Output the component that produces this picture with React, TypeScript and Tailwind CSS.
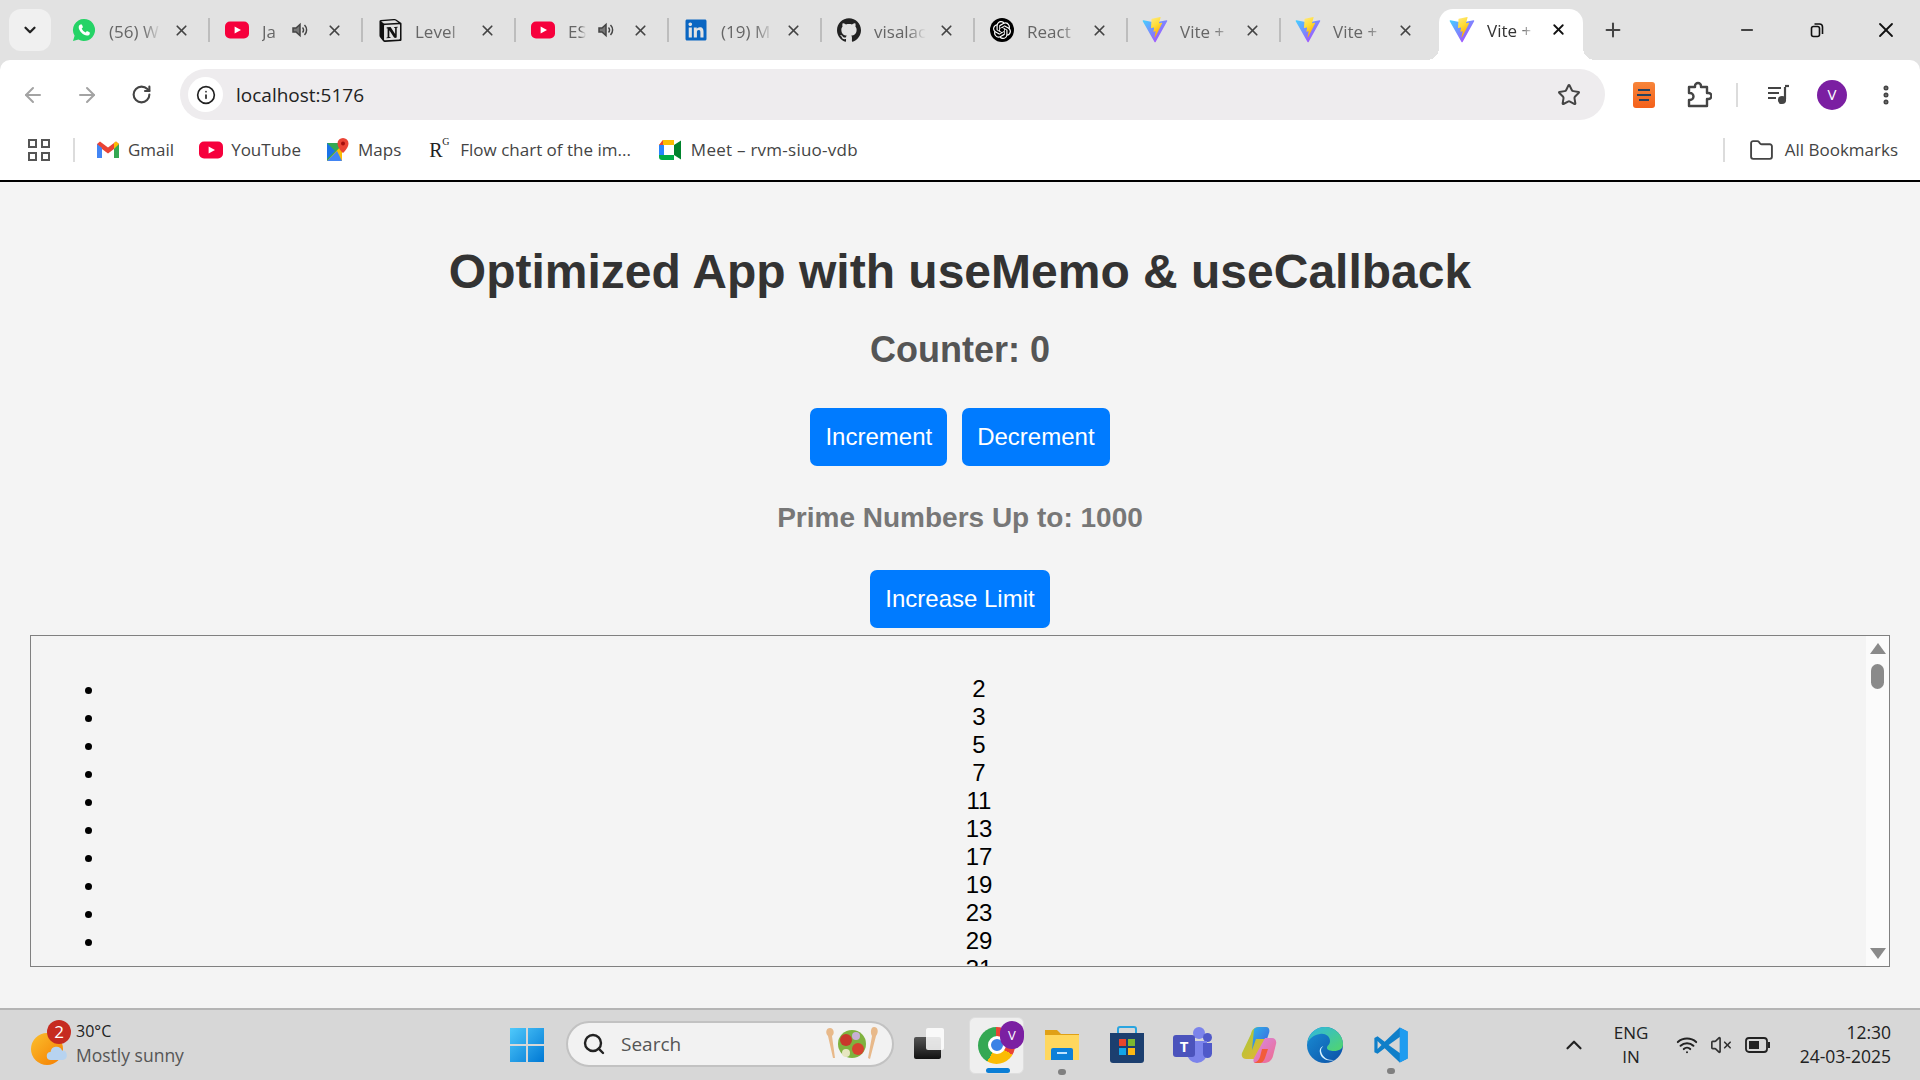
import React from "react";
import { SiNotion, SiGithub, SiOpenai } from "react-icons/si";
import { FaLinkedin } from "react-icons/fa";
import { ArrowLeft, ArrowRight, RotateCw, Info, Star, MoreVertical, Plus, X, Minus, ChevronDown, ChevronUp, Folder, Search, Wifi, VolumeX } from "lucide-react";

const uiFont = "font-['Open_Sans',sans-serif]";

function WhatsAppIcon() {
  return (
    <svg width="24" height="24" viewBox="0 0 24 24">
      <path d="M12 1a11 11 0 0 0-9.400 16.700L1 23l5.500-1.500A11 11 0 1 0 12 1Z" fill="#25d366" />
      <path d="M8.500 6.500c-.6 0-1.800 1-1.800 2.800 0 3.700 4.800 8.300 8.300 8.300 1.800 0 2.800-1.200 2.800-1.900l-.2-1.400-2.700-1.300-1.200 1.400c-1.700-.6-3.300-2.200-4-4l1.300-1.100-1.100-2.700Z" fill="#fff" />
    </svg>
  );
}

function YouTubeIcon({ size = 24 }: { size?: number }) {
  return (
    <svg width={size} height={size} viewBox="0 0 24 24">
      <rect x="0" y="3.500" width="24" height="17" rx="5" fill="#f6003c" />
      <path d="M9.600 8.400 16 12l-6.400 3.600Z" fill="#fff" />
    </svg>
  );
}

function ViteIcon() {
  return (
    <svg width="28" height="28" viewBox="0 0 32 32">
      <defs>
        <linearGradient id="viteA" x1="0" y1="0" x2="1" y2="1">
          <stop offset="0" stopColor="#41d1ff" />
          <stop offset="1" stopColor="#bd34fe" />
        </linearGradient>
        <linearGradient id="viteB" x1="0" y1="0" x2="0.4" y2="1">
          <stop offset="0" stopColor="#ffea83" />
          <stop offset="0.5" stopColor="#ffdd35" />
          <stop offset="1" stopColor="#ffa800" />
        </linearGradient>
      </defs>
      <path d="M29.880 6.040 16.700 29.600a.72.72 0 0 1-1.250 0L2 6.040a.72.72 0 0 1 .75-1.060l13.200 2.360a.72.72 0 0 0 .25 0l12.930-2.360a.72.72 0 0 1 .75 1.060Z" fill="url(#viteA)" />
      <path d="M22 1.100 12.300 3a.36.36 0 0 0-.29.33l-.6 10.080a.36.36 0 0 0 .44.37l2.700-.62a.36.36 0 0 1 .43.42l-.8 3.930a.36.36 0 0 0 .46.42l1.670-.5a.36.36 0 0 1 .46.42l-1.280 6.180c-.08.39.44.6.65.27l.14-.22 7.900-15.770a.36.36 0 0 0-.39-.52l-2.780.54a.36.36 0 0 1-.41-.45l1.810-6.290a.36.36 0 0 0-.42-.45Z" fill="url(#viteB)" />
    </svg>
  );
}

function OpenAiIcon() {
  return (
    <div className="w-6 h-6 rounded-full bg-black flex items-center justify-center">
      <SiOpenai size={18} color="#fff" />
    </div>
  );
}

function SpeakerIcon() {
  return (
    <svg width="18" height="18" viewBox="0 0 18 18" fill="none" stroke="#444" strokeWidth="1.500">
      <path d="M2 7v4h3l4 3.500v-11L5 7Z" fill="#777" />
      <path d="M11.500 6.500a3.500 3.500 0 0 1 0 5M13.500 4a7 7 0 0 1 0 10" />
    </svg>
  );
}

function ExtensionIcon() {
  return (
    <svg width="26" height="28" viewBox="0 0 26 28" fill="none" stroke="#444" strokeWidth="2.400" strokeLinejoin="round">
      <path d="M3 6h6V5a3 3 0 0 1 6 0v1h6v6h1.500a3 3 0 0 1 0 6H21v7H3v-6h1a3 3 0 0 0 0-7H3Z" />
    </svg>
  );
}

interface TabItem {
  icon: React.ReactNode;
  title: string;
  audio?: boolean;
  divider?: boolean;
}

const tabs: TabItem[] = [
  { icon: <WhatsAppIcon />, title: "(56) W", divider: true },
  { icon: <YouTubeIcon />, title: "Ja", audio: true, divider: true },
  { icon: <SiNotion size={23} color="#111" />, title: "Level", divider: true },
  { icon: <YouTubeIcon />, title: "ES", audio: true, divider: true },
  { icon: <FaLinkedin size={24} color="#0a66c2" />, title: "(19) M", divider: true },
  { icon: <SiGithub size={24} color="#222" />, title: "visalac", divider: true },
  { icon: <OpenAiIcon />, title: "React", divider: true },
  { icon: <ViteIcon />, title: "Vite +", divider: true },
  { icon: <ViteIcon />, title: "Vite +" },
];

function Tab({ icon, title, audio, divider }: TabItem) {
  return (
    <div className="w-[153px] h-[40px] flex items-center shrink-0 relative mt-[10px]">
      <div className="w-[54px] flex justify-center">{icon}</div>
      <div className={`${audio ? "w-[18px]" : "w-[52px]"} ml-[-2px] mt-[3px] text-[17px] leading-[24px] text-[#666] whitespace-nowrap [mask-image:linear-gradient(to_right,black_65%,transparent)]`}>
        {title}
      </div>
      {audio && <div className="ml-[11px] w-[18px] flex justify-center"><SpeakerIcon /></div>}
      <div className={`${audio ? "ml-[14px]" : "ml-[9px]"} w-[22px] flex justify-center`}>
        <X size={17} color="#444" strokeWidth={2.400} />
      </div>
      {divider && <div className="absolute right-0 top-[8px] h-[24px] w-[2px] bg-[#bdbdbd]" />}
    </div>
  );
}

function TabStrip() {
  return (
    <div className="h-[60px] bg-[#e2e2e2] flex items-start shrink-0">
      <div className="w-[42px] h-[42px] mt-[9px] ml-[9px] mr-[6px] rounded-[12px] bg-[#f0f0f0] flex items-center justify-center shrink-0">
        <ChevronDown size={18} color="#222" strokeWidth={3} />
      </div>
      {tabs.map((t, i) => (
        <Tab key={i} {...t} />
      ))}
      <div className="relative ml-[5px] mt-[9px] w-[144px] h-[51px] bg-white rounded-t-[14px] flex items-start pt-[7px] shrink-0">
        <div className="absolute bottom-0 -left-3 w-3 h-3 bg-[radial-gradient(circle_at_0_0,transparent_12px,white_12px)]" />
        <div className="absolute bottom-0 -right-3 w-3 h-3 bg-[radial-gradient(circle_at_100%_0,transparent_12px,white_12px)]" />
        <div className="w-[46px] flex justify-center"><ViteIcon /></div>
        <div className="w-[48px] ml-[2px] mt-[3px] text-[17px] leading-[24px] text-[#333] whitespace-nowrap [mask-image:linear-gradient(to_right,black_65%,transparent)]">
          Vite +
        </div>
        <div className="ml-[12px] w-[22px] mt-[5px] flex justify-center">
          <X size={17} color="#111" strokeWidth={2.600} />
        </div>
      </div>
      <div className="ml-[18px] mt-[19px] w-[24px] flex justify-center shrink-0">
        <Plus size={22} color="#444" strokeWidth={2.200} />
      </div>
      <div className="flex-1" />
      <div className="w-[70px] h-[60px] flex items-center justify-center"><Minus size={18} color="#111" strokeWidth={2.200} /></div>
      <div className="w-[70px] h-[60px] flex items-center justify-center">
        <svg width="16" height="16" viewBox="0 0 16 16" fill="none" stroke="#111" strokeWidth="1.600">
          <rect x="2.500" y="4.500" width="8" height="10" rx="2" />
          <path d="M5.500 2h5a3 3 0 0 1 3 3v7" />
        </svg>
      </div>
      <div className="w-[68px] h-[60px] flex items-center justify-center"><X size={24} color="#111" strokeWidth={1.800} /></div>
    </div>
  );
}

function Toolbar() {
  return (
    <div className="h-[60px] bg-white rounded-t-[10px] flex items-start shrink-0 pl-[6px]">
      <div className="w-[54px] h-[51px] mt-[9px] flex items-center justify-center"><ArrowLeft size={24} color="#a3a3a3" strokeWidth={2} /></div>
      <div className="w-[54px] h-[51px] mt-[9px] flex items-center justify-center"><ArrowRight size={24} color="#a3a3a3" strokeWidth={2} /></div>
      <div className="w-[54px] h-[51px] mt-[9px] flex items-center justify-center"><RotateCw size={21} color="#444" strokeWidth={2.400} /></div>
      <div className="flex-1 h-[51px] mt-[9px] ml-[12px] bg-[#eeecee] rounded-full flex items-center pl-[8px] pr-[24px]">
        <div className="w-[35px] h-[35px] rounded-full bg-white flex items-center justify-center">
          <Info size={20} color="#222" strokeWidth={2} />
        </div>
        <span className="ml-[13px] text-[19px] leading-[26px] text-[#222]">localhost:5176</span>
        <div className="flex-1" />
        <Star size={24} color="#444" strokeWidth={2} />
      </div>
      <div className="w-[315px] h-[51px] mt-[9px] flex items-center">
        <div className="ml-[28px] w-[22px] h-[26px] rounded-[3px] bg-[linear-gradient(#f7853a,#f4601a)] flex flex-col items-center justify-center gap-[3px]">
          <div className="w-[12px] h-[2px] bg-[#27415e]" />
          <div className="w-[14px] h-[2px] bg-[#27415e]" />
          <div className="w-[10px] h-[2px] bg-[#27415e]" />
        </div>
        <div className="ml-[31px] w-[26px] flex justify-center"><ExtensionIcon /></div>
        <div className="ml-[24px] w-[2px] h-[24px] bg-[#dcdcdc]" />
        <div className="ml-[28px]">
          <svg width="24" height="22" viewBox="0 0 24 22" fill="none" stroke="#444" strokeWidth="2.200">
            <path d="M2 4h13M2 9h11M2 14h8M19 3v12" />
            <path d="M19 2h4" />
            <circle cx="16" cy="16" r="3" fill="#444" />
          </svg>
        </div>
        <div className="ml-[27px] w-[30px] h-[30px] rounded-full bg-[#7b1fa2] flex items-center justify-center text-white text-[15px]">V</div>
        <div className="ml-[27px] w-[24px] flex justify-center"><MoreVertical size={24} color="#444" strokeWidth={3} /></div>
      </div>
    </div>
  );
}

function GmailIcon() {
  return (
    <svg width="24" height="20" viewBox="0 0 24 20">
      <path d="M1 18h5V9L12 13.500 18 9v9h5V4L20 1.500 12 7.500 4 1.500 1 4Z" fill="#ea4335" />
      <path d="M1 4v14h5V8Z" fill="#4285f4" />
      <path d="M23 4v14h-5V8Z" fill="#34a853" />
      <path d="M18 9l5-5-3-2.500-2 1.500Z" fill="#fbbc04" />
    </svg>
  );
}

function MapsIcon() {
  return (
    <svg width="24" height="26" viewBox="0 0 24 26">
      <path d="M2 6h15v18H2Z" fill="#34a853" />
      <path d="M2 24 17 8v16Z" fill="#fbbc04" />
      <path d="M2 24 12 14l5 10Z" fill="#4285f4" />
      <path d="M2 6l8 8-8 8Z" fill="#1a73e8" />
      <path d="M18 1a5.500 5.500 0 0 0-5.500 5.500C12.500 11 18 16 18 16s5.500-5 5.500-9.500A5.500 5.500 0 0 0 18 1Z" fill="#ea4335" />
      <circle cx="18" cy="6.500" r="2" fill="#a50e0e" />
    </svg>
  );
}

function MeetIcon() {
  return (
    <svg width="24" height="22" viewBox="0 0 24 22">
      <path d="M5 1h11v5H1Z" fill="#fbbc04" />
      <path d="M1 6h5v10H1Z" fill="#2684fc" />
      <path d="M1 16h15v5H4a3 3 0 0 1-3-3Z" fill="#00ac47" />
      <path d="M6 6h10v10H6Z" fill="#fff" />
      <path d="M16 6v10l7 4.500V1.500Z" fill="#00832d" />
      <path d="M5 1v5H1Z" fill="#ea4335" />
    </svg>
  );
}

function BookmarksBar() {
  return (
    <div className="h-[62px] bg-white border-b-2 border-black flex items-center shrink-0 text-[17px] text-[#444]">
      <div className="ml-[28px] w-[22px] h-[22px] grid grid-cols-2 gap-[4px]">
        <div className="border-2 border-[#555]" />
        <div className="border-2 border-[#555]" />
        <div className="border-2 border-[#555]" />
        <div className="border-2 border-[#555]" />
      </div>
      <div className="ml-[23px] w-[2px] h-[24px] bg-[#dcdcdc]" />
      <div className="ml-[21px]"><GmailIcon /></div>
      <span className="ml-[8px]">Gmail</span>
      <div className="ml-[25px]"><YouTubeIcon /></div>
      <span className="ml-[8px]">YouTube</span>
      <div className="ml-[24px]"><MapsIcon /></div>
      <span className="ml-[9px]">Maps</span>
      <span className="ml-[28px] w-[22px] font-['Liberation_Serif',serif] text-[20px] text-[#222] relative">
        R<span className="absolute left-[13px] top-[-1px] text-[10px]">G</span>
      </span>
      <span className="ml-[9px]">Flow chart of the im...</span>
      <div className="ml-[27px]"><MeetIcon /></div>
      <span className="ml-[9px] tracking-[0.25px]">Meet – rvm-siuo-vdb</span>
      <div className="flex-1" />
      <div className="w-[2px] h-[24px] bg-[#dcdcdc]" />
      <div className="ml-[24px]"><Folder size={25} color="#444" strokeWidth={1.800} /></div>
      <span className="ml-[11px] mr-[22px]">All Bookmarks</span>
    </div>
  );
}

const primes = [2, 3, 5, 7, 11, 13, 17, 19, 23, 29, 31, 37];

function PageButton({ children }: { children: React.ReactNode }) {
  return (
    <button className="h-[58px] px-[15px] rounded-[7px] bg-[#007bff] text-white text-[24px] leading-[28px]">
      {children}
    </button>
  );
}

function PrimeList() {
  return (
    <div className="mx-[30px] mt-[7px] h-[332px] border border-[#808080] flex overflow-hidden self-stretch">
      <ul className="flex-1 list-disc pl-[75px] pr-[14px] pt-[39px] overflow-hidden text-[24px] leading-[28px] text-black text-center">
        {primes.map((n) => (
          <li key={n}>{n}</li>
        ))}
      </ul>
      <div className="w-[23px] bg-[#fbfbfb] flex flex-col items-center pt-[7px] shrink-0">
        <div className="w-0 h-0 border-x-[8px] border-x-transparent border-b-[11px] border-b-[#8a8a8a]" />
        <div className="w-[13px] h-[25px] rounded-full bg-[#8a8a8a] mt-[10px]" />
        <div className="flex-1" />
        <div className="w-0 h-0 border-x-[8px] border-x-transparent border-t-[11px] border-t-[#8a8a8a] mb-[7px]" />
      </div>
    </div>
  );
}

function Page() {
  return (
    <div className="flex-1 min-h-0 bg-[#f4f4f4] flex flex-col items-center pt-[62px] font-['Liberation_Sans',sans-serif]">
      <h1 className="text-[48px] leading-[55px] font-bold text-[#333]">Optimized App with useMemo &amp; useCallback</h1>
      <h2 className="mt-[30px] text-[36px] leading-[42px] font-bold text-[#555]">Counter: 0</h2>
      <div className="mt-[37px] flex gap-[15px]">
        <PageButton>Increment</PageButton>
        <PageButton>Decrement</PageButton>
      </div>
      <h3 className="mt-[35px] text-[28px] leading-[33px] font-bold text-[#777]">Prime Numbers Up to: 1000</h3>
      <div className="mt-[36px]">
        <PageButton>Increase Limit</PageButton>
      </div>
      <PrimeList />
    </div>
  );
}

function WeatherIcon() {
  return (
    <div className="relative w-[34px] h-[34px]">
      <div className="absolute left-0 top-[1px] w-[32px] h-[32px] rounded-full bg-[linear-gradient(135deg,#fbc02d,#f57c00)]" />
      <div className="absolute left-[16px] top-[-12px] w-[24px] h-[24px] rounded-full bg-[#c62b20] text-white text-[17px] leading-[24px] text-center">2</div>
      <svg className="absolute left-[14px] top-[12px]" width="24" height="18" viewBox="0 0 24 18">
        <path d="M6 16a4 4 0 0 1-.5-8A6 6 0 0 1 17 6.500 4.800 4.800 0 0 1 18 16Z" fill="#b7d3f0" />
      </svg>
    </div>
  );
}

function WindowsLogo() {
  return (
    <svg width="36" height="36" viewBox="0 0 36 36">
      <defs>
        <linearGradient id="win" x1="0" y1="0" x2="1" y2="1">
          <stop offset="0" stopColor="#4fc9fb" />
          <stop offset="1" stopColor="#0078d4" />
        </linearGradient>
      </defs>
      <path d="M1 1h16v16H1ZM19 1h16v16H19ZM1 19h16v16H1ZM19 19h16v16H19Z" fill="url(#win)" />
    </svg>
  );
}

function SaladIcon() {
  return (
    <svg width="62" height="40" viewBox="0 0 62 40">
      <path d="M8 4c4 0 5 6 2 8l3 22h-2L6 12C3 9 4 4 8 4Z" fill="#e8b98a" />
      <path d="M52 3c4 0 5 5 2 9l-6 23-2-1 4-22c-2-4-1-9 2-9Z" fill="#e8b98a" />
      <circle cx="30" cy="20" r="14" fill="#7fb23f" />
      <circle cx="24" cy="16" r="6" fill="#c9372c" />
      <circle cx="36" cy="25" r="6" fill="#d6432f" />
      <circle cx="34" cy="12" r="4" fill="#c7b0d6" />
      <circle cx="24" cy="29" r="4" fill="#e6e6c0" />
    </svg>
  );
}

function TaskViewIcon() {
  return (
    <div className="relative w-[28px] h-[28px]">
      <div className="absolute left-0 bottom-0 w-[27px] h-[22px] rounded-[2px] bg-[linear-gradient(#555,#111)]" />
      <div className="absolute right-[-2px] top-[-3px] w-[18px] h-[22px] rounded-[2px] bg-white/85" />
    </div>
  );
}

function ChromeIcon() {
  return (
    <div className="relative w-[37px] h-[37px] rounded-full bg-[conic-gradient(#ea4335_0deg_120deg,#fbbc04_120deg_210deg,#34a853_210deg_360deg)] flex items-center justify-center">
      <div className="w-[18px] h-[18px] rounded-full bg-[#3b82e6] border-[3px] border-white" />
    </div>
  );
}

function ExplorerIcon() {
  return (
    <svg width="38" height="38" viewBox="0 0 38 38">
      <path d="M2 4h12l4 4h18v26H2Z" fill="#e0a016" />
      <path d="M2 9h34v25H2Z" fill="#ffd75e" />
      <path d="M8 24a2 2 0 0 1 2-2h18a2 2 0 0 1 2 2v10H8Z" fill="#0d80d8" />
      <rect x="14" y="26" width="10" height="2" fill="#bfe3ff" />
    </svg>
  );
}

function StoreIcon() {
  return (
    <svg width="36" height="38" viewBox="0 0 36 38">
      <path d="M9 7V3a2 2 0 0 1 2-2h14a2 2 0 0 1 2 2v4" fill="none" stroke="#2aa5e0" strokeWidth="2" />
      <path d="M1 7h34v27a3 3 0 0 1-3 3H4a3 3 0 0 1-3-3Z" fill="#1c3f6f" />
      <rect x="10" y="13" width="7" height="7" fill="#e8452c" />
      <rect x="19" y="13" width="7" height="7" fill="#7cb82f" />
      <rect x="10" y="22" width="7" height="7" fill="#12a5e8" />
      <rect x="19" y="22" width="7" height="7" fill="#fdb813" />
    </svg>
  );
}

function TeamsIcon() {
  return (
    <div className="relative w-[38px] h-[36px]">
      <div className="absolute left-[20px] top-0 w-[12px] h-[12px] rounded-full bg-[#7b83eb]" />
      <div className="absolute left-[30px] top-[6px] w-[9px] h-[9px] rounded-full bg-[#5059c9]" />
      <div className="absolute left-[14px] top-[14px] w-[20px] h-[22px] rounded-b-[10px] bg-[#7b83eb]" />
      <div className="absolute left-[30px] top-[16px] w-[9px] h-[15px] rounded-b-[5px] bg-[#5059c9]" />
      <div className="absolute left-0 top-[8px] w-[22px] h-[22px] rounded-[3px] bg-[#4b53bc] text-white text-[15px] font-bold leading-[22px] text-center">T</div>
    </div>
  );
}

function CopilotIcon() {
  return (
    <svg width="36" height="38" viewBox="0 0 36 38">
      <defs>
        <linearGradient id="copA" x1="0" y1="0" x2="1" y2="1">
          <stop offset="0" stopColor="#2fb4e8" />
          <stop offset="1" stopColor="#3d5de0" />
        </linearGradient>
        <linearGradient id="copB" x1="0" y1="0" x2="1" y2="1">
          <stop offset="0" stopColor="#d58ae8" />
          <stop offset="1" stopColor="#f06a8a" />
        </linearGradient>
        <linearGradient id="copC" x1="0" y1="0" x2="1" y2="1">
          <stop offset="0" stopColor="#9ccc3c" />
          <stop offset="1" stopColor="#f2b230" />
        </linearGradient>
      </defs>
      <path d="M10 8C11 3 14 1 18 1h7c3 0 3 3 2 6l-6 20c-1 4-5 6-8 6H5c-3 0-5-3-4-6Z" fill="url(#copC)" />
      <path d="M13 3c2-2 4-2 7-2h5c3 0 4 3 3 6l-2 6H15l-4 11Z" fill="url(#copA)" />
      <path d="M24 12h7c3 0 5 3 4 6l-3 12c-1 4-4 7-8 7h-9c-3 0-3-3-2-5Z" fill="url(#copB)" />
      <path d="M21 23h6l-3 9c-1 3-3 5-6 5h-5c3-1 5-3 6-6Z" fill="#f25c3a" />
    </svg>
  );
}

function EdgeIcon() {
  return (
    <svg width="38" height="38" viewBox="0 0 38 38">
      <defs>
        <linearGradient id="edgeA" x1="0" y1="0" x2="1" y2="1">
          <stop offset="0" stopColor="#2fb6e4" />
          <stop offset="1" stopColor="#52d66a" />
        </linearGradient>
        <linearGradient id="edgeB" x1="0" y1="0" x2="1" y2="1">
          <stop offset="0" stopColor="#1a8fd6" />
          <stop offset="1" stopColor="#0b4fa5" />
        </linearGradient>
      </defs>
      <circle cx="19" cy="19" r="18" fill="url(#edgeB)" />
      <path d="M1.500 17C3 7 10 1 19 1c10 0 18 8 18 17 0 5-4 7-9 7-4 0-7-1-7-3 0-3 3-3 3-7 0-5-5-8-10-7-7 1-11 5-12.500 9Z" fill="url(#edgeA)" />
      <path d="M19 20c-4 0-6 3-5 7 1 5 7 9 14 7-8 1-13-5-13-10 0-2 2-4 4-4Z" fill="#d9f2ff" />
    </svg>
  );
}

function VsCodeIcon() {
  return (
    <svg width="38" height="38" viewBox="0 0 24 24">
      <path d="M17.500 1 8 10 3.500 6.500 1.500 7.500v9l2 1L8 14l9.500 9 5-2.400V3.400Z" fill="#0f7fc9" />
      <path d="M17.500 1l5 2.400v17.200l-5 2.400Z" fill="#1f9cf0" />
      <path d="M17.500 7v10L10.500 12Z" fill="#d6d6d6" />
      <path d="M3.500 9.500 6 12l-2.500 2.500Z" fill="#d6d6d6" />
    </svg>
  );
}

function Taskbar() {
  return (
    <div className="h-[72px] bg-[#d7d7d7] border-t-[2px] border-[#b4b4b4] flex items-center shrink-0 text-[#222]">
      <div className="ml-[31px] mt-[7px]"><WeatherIcon /></div>
      <div className="ml-[11px] w-[120px] flex flex-col mb-[4px]">
        <span className="text-[16px] leading-[24px]">30°C</span>
        <span className="text-[17.500px] leading-[24px] text-[#555] whitespace-nowrap">Mostly sunny</span>
      </div>
      <div className="ml-[313px]"><WindowsLogo /></div>
      <div className="ml-[21px] w-[328px] h-[46px] mb-[2px] rounded-full bg-[#f2f2f2] border-2 border-[#c2c2c2] flex items-center pl-[14px] pr-[8px]">
        <Search size={24} color="#222" strokeWidth={2.400} />
        <span className="ml-[15px] text-[19px] text-[#555]">Search</span>
        <div className="flex-1" />
        <SaladIcon />
      </div>
      <div className="ml-[20px]"><TaskViewIcon /></div>
      <div className="relative ml-[27px] w-[55px] h-[57px] rounded-[6px] bg-[#efefef] border border-[#dedede] flex items-center justify-center">
        <ChromeIcon />
        <div className="absolute left-[30px] top-[3px] w-[24px] h-[28px] rounded-full bg-[#7b1fa2] text-white text-[13px] leading-[28px] text-center">V</div>
        <div className="absolute left-[16px] bottom-[0px] w-[24px] h-[5px] rounded-full bg-[#0a7ed6]" />
      </div>
      <div className="relative ml-[19px] w-[38px] flex justify-center">
        <ExplorerIcon />
        <div className="absolute bottom-[-11px] left-[15px] w-[8px] h-[6px] rounded-full bg-[#808080]" />
      </div>
      <div className="ml-[28px] w-[36px]"><StoreIcon /></div>
      <div className="ml-[28px] w-[38px]"><TeamsIcon /></div>
      <div className="ml-[30px] w-[36px]"><CopilotIcon /></div>
      <div className="ml-[29px] w-[38px]"><EdgeIcon /></div>
      <div className="relative ml-[28px] w-[38px]">
        <VsCodeIcon />
        <div className="absolute bottom-[-10px] left-[15px] w-[8px] h-[6px] rounded-full bg-[#808080]" />
      </div>
      <div className="ml-[151px]"><ChevronUp size={26} color="#222" strokeWidth={2} /></div>
      <div className="ml-[14px] w-[60px] flex flex-col items-center text-[17px] leading-[24px] mb-[1px]">
        <span>ENG</span>
        <span>IN</span>
      </div>
      <div className="ml-[15px]"><Wifi size={22} color="#222" strokeWidth={2.200} /></div>
      <div className="ml-[12px]"><VolumeX size={22} color="#333" strokeWidth={1.800} /></div>
      <div className="ml-[13px]">
        <svg width="26" height="20" viewBox="0 0 26 20" fill="none">
          <rect x="1" y="3" width="21" height="14" rx="3" stroke="#222" strokeWidth="1.800" />
          <rect x="4" y="6" width="10" height="8" fill="#222" />
          <rect x="23" y="7" width="2" height="6" fill="#222" />
        </svg>
      </div>
      <div className="flex-1" />
      <div className="mr-[29px] flex flex-col items-end text-[17.500px] leading-[24px] mb-[3px]">
        <span>12:30</span>
        <span>24-03-2025</span>
      </div>
    </div>
  );
}

export default function App() {
  return (
    <div className={`w-[1920px] h-screen flex flex-col overflow-hidden bg-[#e2e2e2] ${uiFont}`}>
      <TabStrip />
      <Toolbar />
      <BookmarksBar />
      <Page />
      <Taskbar />
    </div>
  );
}
